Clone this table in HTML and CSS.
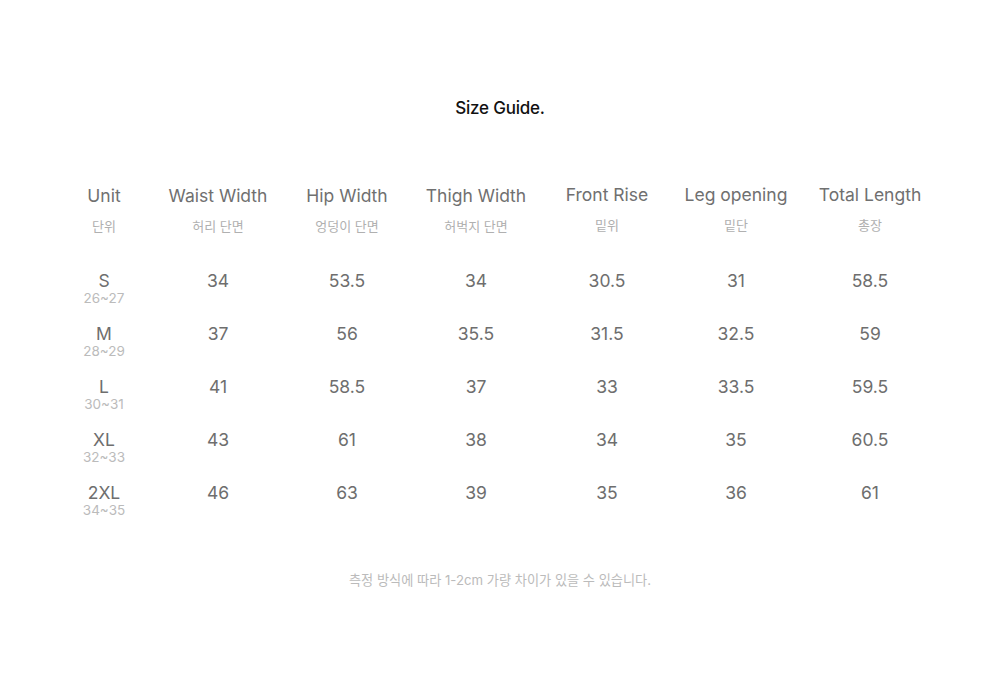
FILE: index.html
```html
<!DOCTYPE html>
<html lang="ko">
<head>
<meta charset="utf-8">
<title>Size Guide</title>
<link rel="stylesheet" href="styles.css">
</head>
<body>
<div class="page">
  <h1 class="title">Size Guide.</h1>
  <div class="table">
    <div class="row head">
      <div class="cell"><span class="en">Unit</span><span class="ko">단위</span></div>
      <div class="cell"><span class="en">Waist Width</span><span class="ko">허리 단면</span></div>
      <div class="cell"><span class="en">Hip Width</span><span class="ko">엉덩이 단면</span></div>
      <div class="cell"><span class="en">Thigh Width</span><span class="ko">허벅지 단면</span></div>
      <div class="cell up"><span class="en">Front Rise</span><span class="ko">밑위</span></div>
      <div class="cell up"><span class="en">Leg opening</span><span class="ko">밑단</span></div>
      <div class="cell up"><span class="en">Total Length</span><span class="ko">총장</span></div>
    </div>
    <div class="row data">
      <div class="cell"><span class="v">S</span><span class="r">26~27</span></div>
      <div class="cell"><span class="v">34</span></div>
      <div class="cell"><span class="v">53.5</span></div>
      <div class="cell"><span class="v">34</span></div>
      <div class="cell"><span class="v">30.5</span></div>
      <div class="cell"><span class="v">31</span></div>
      <div class="cell"><span class="v">58.5</span></div>
    </div>
    <div class="row data">
      <div class="cell"><span class="v">M</span><span class="r">28~29</span></div>
      <div class="cell"><span class="v">37</span></div>
      <div class="cell"><span class="v">56</span></div>
      <div class="cell"><span class="v">35.5</span></div>
      <div class="cell"><span class="v">31.5</span></div>
      <div class="cell"><span class="v">32.5</span></div>
      <div class="cell"><span class="v">59</span></div>
    </div>
    <div class="row data">
      <div class="cell"><span class="v">L</span><span class="r">30~31</span></div>
      <div class="cell"><span class="v">41</span></div>
      <div class="cell"><span class="v">58.5</span></div>
      <div class="cell"><span class="v">37</span></div>
      <div class="cell"><span class="v">33</span></div>
      <div class="cell"><span class="v">33.5</span></div>
      <div class="cell"><span class="v">59.5</span></div>
    </div>
    <div class="row data">
      <div class="cell"><span class="v">XL</span><span class="r">32~33</span></div>
      <div class="cell"><span class="v">43</span></div>
      <div class="cell"><span class="v">61</span></div>
      <div class="cell"><span class="v">38</span></div>
      <div class="cell"><span class="v">34</span></div>
      <div class="cell"><span class="v">35</span></div>
      <div class="cell"><span class="v">60.5</span></div>
    </div>
    <div class="row data">
      <div class="cell"><span class="v">2XL</span><span class="r">34~35</span></div>
      <div class="cell"><span class="v">46</span></div>
      <div class="cell"><span class="v">63</span></div>
      <div class="cell"><span class="v">39</span></div>
      <div class="cell"><span class="v">35</span></div>
      <div class="cell"><span class="v">36</span></div>
      <div class="cell"><span class="v">61</span></div>
    </div>
  </div>
  <p class="note">측정 방식에 따라 1-2cm 가량 차이가 있을 수 있습니다.</p>
</div>
</body>
</html>
```
FILE: styles.css
```css
* { box-sizing: border-box; }
html, body { margin: 0; padding: 0; background: #fff; }
body {
  font-family: Inter, "Noto Sans CJK KR", sans-serif;
  color: #707070;
}
.page {
  width: 1000px;
  padding-top: 98px;
}
.title {
  margin: 0;
  text-align: center;
  font-size: 17px;
  line-height: 20px;
  font-weight: 500;
  color: #111;
  letter-spacing: -0.2px;
}
.table {
  margin-top: 66px;
  margin-left: 47px;
  display: flex;
  flex-direction: column;
}
.row {
  display: grid;
  grid-template-columns: 114px 114px 144px 114px 148px 110px 158px;
}
.cell {
  display: flex;
  flex-direction: column;
  align-items: center;
  text-align: center;
  white-space: nowrap;
}
.head .en {
  font-size: 17.5px;
  line-height: 24px;
  color: #707070;
}
.head .up { margin-top: -1px; }
.head .ko {
  margin-top: 9px;
  font-size: 13px;
  line-height: 18px;
  color: #b0b0b0;
}
.head { margin-bottom: 36px; }
.data { margin-bottom: 19px; }
.data .v {
  font-size: 17.5px;
  line-height: 20px;
  color: #6e6e6e;
}
.data .r {
  font-size: 13.5px;
  line-height: 14px;
  color: #bbb;
}
.note {
  margin: 35px 0 0;
  text-align: center;
  font-size: 13.2px;
  line-height: 18px;
  color: #bbb;
}
```
